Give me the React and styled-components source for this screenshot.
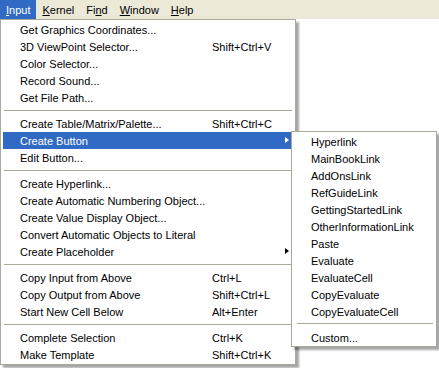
import React from "react";
import styled, { createGlobalStyle } from "styled-components";

const GlobalStyle = createGlobalStyle`
  html, body {
    margin: 0;
    padding: 0;
    background: #ffffff;
  }
  body {
    width: 439px;
    height: 368px;
    overflow: hidden;
    font-family: "Liberation Sans", Arial, sans-serif;
    font-size: 11px;
    color: #000000;
  }
`;

const MenuBar = styled.div`
  display: flex;
  height: 19px;
  background: #ece9d8;
`;

const BarItem = styled.div`
  display: flex;
  align-items: center;
  padding: 0 6px;
  height: 19px;
  background: ${(p) => (p.active ? "#316ac5" : "transparent")};
  color: ${(p) => (p.active ? "#ffffff" : "#000000")};
  u {
    text-decoration: underline;
  }
`;

const Menu = styled.div`
  position: relative;
  box-sizing: border-box;
  width: ${(p) => p.width}px;
  background: #ffffff;
  border: 1px solid #aca899;
  padding: 1px 3px 1px 2px;
  box-shadow: 3px 3px 2px rgba(0, 0, 0, 0.35);
`;

const SubMenu = styled(Menu)`
  position: absolute;
  left: calc(100% - 1px);
  top: -1px;
  z-index: 2;
  padding: 1px 2px 0 2px;
`;

const Row = styled.div`
  position: relative;
  display: flex;
  align-items: center;
  height: 17px;
  padding-left: ${(p) => p.indent}px;
  background: ${(p) => (p.active ? "#316ac5" : "transparent")};
  color: ${(p) => (p.active ? "#ffffff" : "#000000")};
  white-space: nowrap;
`;

const Label = styled.span`
  width: ${(p) => (p.wide ? "192px" : "auto")};
  flex: ${(p) => (p.wide ? "none" : "1")};
`;

const Shortcut = styled.span`
  flex: 1;
`;

const Arrow = styled.span`
  position: absolute;
  right: 3px;
  top: 5px;
  width: 0;
  height: 0;
  border-top: 3.5px solid transparent;
  border-bottom: 3.5px solid transparent;
  border-left: 4px solid ${(p) => (p.active ? "#ffffff" : "#000000")};
`;

const Separator = styled.div`
  height: 1px;
  margin: 4px 0 4px 1px;
  background: #aca899;
`;

const SubSeparator = styled(Separator)`
  margin: 3px 1px 5px 3px;
`;

const mainItems = [
  [
    ["Get Graphics Coordinates..."],
    ["3D ViewPoint Selector...", "Shift+Ctrl+V"],
    ["Color Selector..."],
    ["Record Sound..."],
    ["Get File Path..."],
  ],
  [
    ["Create Table/Matrix/Palette...", "Shift+Ctrl+C"],
    ["Create Button", null, "sub"],
    ["Edit Button..."],
  ],
  [
    ["Create Hyperlink..."],
    ["Create Automatic Numbering Object..."],
    ["Create Value Display Object..."],
    ["Convert Automatic Objects to Literal"],
    ["Create Placeholder", null, "arrow"],
  ],
  [
    ["Copy Input from Above", "Ctrl+L"],
    ["Copy Output from Above", "Shift+Ctrl+L"],
    ["Start New Cell Below", "Alt+Enter"],
  ],
  [
    ["Complete Selection", "Ctrl+K"],
    ["Make Template", "Shift+Ctrl+K"],
  ],
];

const buttonItems = [
  "Hyperlink",
  "MainBookLink",
  "AddOnsLink",
  "RefGuideLink",
  "GettingStartedLink",
  "OtherInformationLink",
  "Paste",
  "Evaluate",
  "EvaluateCell",
  "CopyEvaluate",
  "CopyEvaluateCell",
];

function ButtonMenu() {
  return (
    <SubMenu width={146}>
      {buttonItems.map((name) => (
        <Row key={name} indent={17}>
          <Label>{name}</Label>
        </Row>
      ))}
      <SubSeparator />
      <Row indent={17}>
        <Label>Custom...</Label>
      </Row>
    </SubMenu>
  );
}

export default function App() {
  return (
    <>
      <GlobalStyle />
      <MenuBar>
        <BarItem active>
          <span>
            <u>I</u>nput
          </span>
        </BarItem>
        <BarItem>
          <span>
            <u>K</u>ernel
          </span>
        </BarItem>
        <BarItem>
          <span>
            Fi<u>n</u>d
          </span>
        </BarItem>
        <BarItem>
          <span>
            <u>W</u>indow
          </span>
        </BarItem>
        <BarItem>
          <span>
            <u>H</u>elp
          </span>
        </BarItem>
      </MenuBar>
      <Menu width={296}>
        {mainItems.map((group, gi) => (
          <React.Fragment key={gi}>
            {gi > 0 && <Separator />}
            {group.map(([label, shortcut, kind]) => {
              const active = kind === "sub";
              return (
                <Row key={label} indent={17} active={active}>
                  <Label wide>{label}</Label>
                  {shortcut && <Shortcut>{shortcut}</Shortcut>}
                  {kind && <Arrow active={active} />}
                  {active && <ButtonMenu />}
                </Row>
              );
            })}
          </React.Fragment>
        ))}
      </Menu>
    </>
  );
}
